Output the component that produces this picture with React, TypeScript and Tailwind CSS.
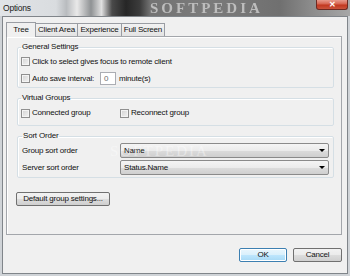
const font = { fontFamily: '"Liberation Sans", Arial, sans-serif' };

function CheckBox({ label }: { label: string }) {
  return (
    <label className="flex items-center gap-[2px] whitespace-nowrap">
      <span className="h-[9px] w-[9px] shrink-0 border border-[#8f8f8f] bg-[linear-gradient(135deg,#d2d2d2,#f4f4f4)] shadow-[inset_0_0_0_1px_#f4f4f4]" />
      <span>{label}</span>
    </label>
  );
}

function Combo({ value }: { value: string }) {
  return (
    <div className="flex h-[15px] w-[209px] items-center justify-between rounded-[2px] border border-[#8a8a8a] bg-[linear-gradient(180deg,#f4f4f4_0%,#ebebeb_50%,#dcdcdc_51%,#cfcfcf_100%)] pl-[3px] pr-[3px]">
      <span>{value}</span>
      <span className="h-0 w-0 border-x-[3px] border-t-[3px] border-x-transparent border-t-black" />
    </div>
  );
}

function Tab({ label, width, active }: { label: string; width: string; active?: boolean }) {
  return active ? (
    <div
      className={`relative z-10 -mb-px flex h-[15px] items-center justify-center border border-b-0 border-[#9a9da3] bg-[#f0f0f0] ${width}`}
    >
      {label}
    </div>
  ) : (
    <div
      className={`flex h-[13px] items-center justify-center border border-b-0 border-l-0 border-[#9a9da3] bg-[linear-gradient(180deg,#f2f2f2,#e3e3e3)] ${width}`}
    >
      {label}
    </div>
  );
}

export default function App() {
  return (
    <div
      className="relative h-[276px] w-[350px] overflow-hidden bg-[#cfd3d7] text-[8px] leading-[12px] tracking-[-0.2px] text-[#111]"
      style={font}
    >
      {/* title bar */}
      <div className="relative flex h-[16px] items-center overflow-hidden bg-[linear-gradient(90deg,#e1e4e7_0%,#d9dcdf_16%,#b9bcbf_19%,#e9e9e9_22%,#8f9294_26%,#e0e0e0_29%,#4a4a4a_32%,#262626_36%,#3c3c3c_40%,#737373_43%,#7b7b7b_60%,#707070_80%,#8c8c8c_89%,#a7a7a7_100%)] pl-[3px]">
        <span className="text-[8.5px] text-[#1a1a1a]">Options</span>
        <span
          className="absolute left-[150px] top-[0px] text-[15px] font-bold leading-[16px] tracking-[3px] text-[#bdbdbd] blur-[0.6px]"
          style={{ fontFamily: '"Liberation Serif", serif' }}
        >
          SOFTPEDIA
        </span>
        <div className="absolute right-[2px] top-0 flex h-[10px] w-[32px] items-center justify-center rounded-b-[3px] border border-t-0 border-[#6e2a22] bg-[linear-gradient(180deg,#e79a8c_0%,#d6634f_45%,#c2371f_55%,#c9533c_100%)] text-[8px] font-bold leading-none text-white">
          ✕
        </div>
      </div>

      {/* window frame */}
      <div className="mx-[2px] h-[258px] border border-[#80858a] bg-[#f0f0f0]">
        <div className="flex h-[19px] items-end pl-[3px]">
          <Tab label="Tree" width="w-[30px]" active />
          <Tab label="Client Area" width="w-[42px]" />
          <Tab label="Experience" width="w-[44px]" />
          <Tab label="Full Screen" width="w-[43px]" />
        </div>

        <div className="ml-[3px] h-[199px] w-[336px] border border-[#a3a6ab] shadow-[inset_1px_1px_0_#ffffff]">
          <fieldset className="ml-[10px] mt-[4px] w-[317px] rounded-[2px] border border-[#d5dfe5] pl-[3px] shadow-[inset_1px_1px_0_#fff]">
            <legend className="px-[1px]">General Settings</legend>
            <div className="flex h-[17px] items-center">
              <CheckBox label="Click to select gives focus to remote client" />
            </div>
            <div className="flex h-[17px] items-center">
              <div className="w-[79px]">
                <CheckBox label="Auto save interval:" />
              </div>
              <span className="flex h-[13px] w-[16px] items-center border border-[#abadb3] bg-white pl-[3px] text-[#6d6d6d]">
                0
              </span>
              <span className="ml-[3px]">minute(s)</span>
            </div>
          </fieldset>

          <fieldset className="ml-[10px] mt-[4px] w-[317px] rounded-[2px] border border-[#d5dfe5] pb-[3px] pl-[3px] shadow-[inset_1px_1px_0_#fff]">
            <legend className="px-[1px]">Virtual Groups</legend>
            <div className="flex h-[18px] items-center">
              <div className="w-[99px]">
                <CheckBox label="Connected group" />
              </div>
              <CheckBox label="Reconnect group" />
            </div>
          </fieldset>

          <fieldset className="relative ml-[10px] mt-[4px] w-[317px] rounded-[2px] border border-[#d5dfe5] pb-[2px] pl-[4px] pt-[1px] shadow-[inset_1px_1px_0_#fff]">
            <legend className="px-[1px]">Sort Order</legend>
            <div className="flex flex-col gap-[2px]">
              <div className="flex items-center">
                <span className="w-[98px]">Group sort order</span>
                <Combo value="Name" />
              </div>
              <div className="flex items-center">
                <span className="w-[98px]">Server sort order</span>
                <Combo value="Status.Name" />
              </div>
            </div>
            <span
              className="pointer-events-none absolute left-[92px] top-[3px] text-[15px] tracking-[2px] text-white/40"
              style={{ fontFamily: '"Liberation Serif", serif' }}
            >
              SOFTPEDIA
            </span>
          </fieldset>

          <button className="ml-[9px] mt-[14px] flex h-[14px] w-[94px] items-center justify-center whitespace-nowrap rounded-[2px] border border-[#707070] bg-[linear-gradient(180deg,#f2f2f2_0%,#ebebeb_50%,#dddddd_51%,#cfcfcf_100%)]">
            Default group settings...
          </button>
        </div>

        <div className="mt-[13px] flex justify-end gap-[6px] pr-[5px]">
          <button className="flex h-[14px] w-[48px] items-center justify-center rounded-[2px] border border-[#3c7fb1] bg-[linear-gradient(180deg,#eaf6fd_0%,#d9f0fc_50%,#bee6fd_51%,#a7d9f5_100%)] shadow-[inset_0_0_0_1px_#ffffff]">
            OK
          </button>
          <button className="flex h-[14px] w-[49px] items-center justify-center rounded-[2px] border border-[#707070] bg-[linear-gradient(180deg,#f2f2f2_0%,#ebebeb_50%,#dddddd_51%,#cfcfcf_100%)]">
            Cancel
          </button>
        </div>
      </div>
    </div>
  );
}
